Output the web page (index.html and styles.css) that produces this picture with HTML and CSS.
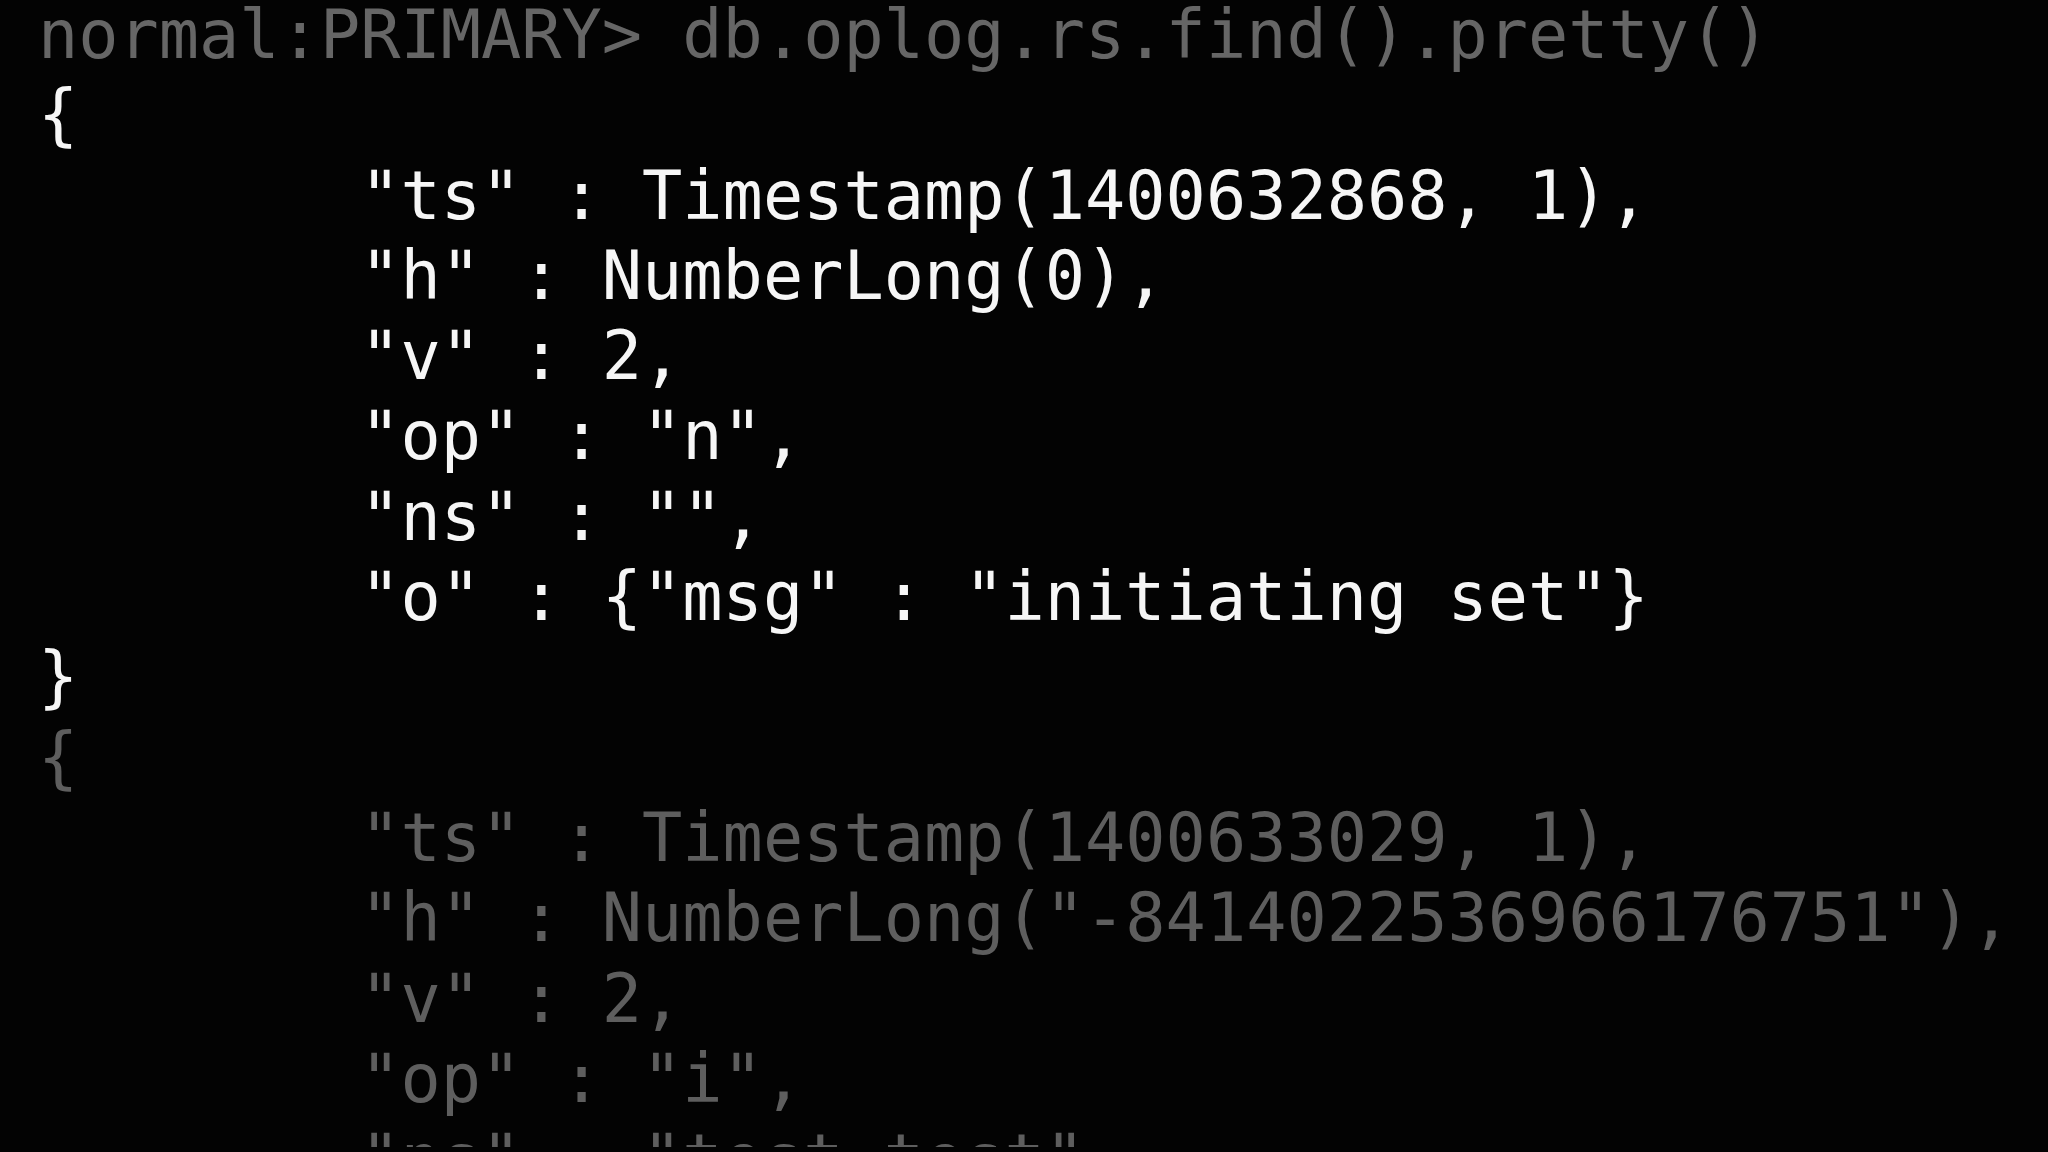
FILE: index.html
```html
<!DOCTYPE html>
<html lang="en">
<head>
  <meta charset="UTF-8"/>
  <title>mongo shell - oplog</title>
  <link rel="stylesheet" href="styles.css">
</head>
<body>
  <div class="terminal">
<pre class="prompt">normal:PRIMARY&gt; db.oplog.rs.find().pretty()</pre>
<pre class="record">{
        "ts" : Timestamp(1400632868, 1),
        "h" : NumberLong(0),
        "v" : 2,
        "op" : "n",
        "ns" : "",
        "o" : {"msg" : "initiating set"}
}</pre>
<pre class="record dim">{
        "ts" : Timestamp(1400633029, 1),
        "h" : NumberLong("-8414022536966176751"),
        "v" : 2,
        "op" : "i",
        "ns" : "test.test",
        "o" : {"_id" : ObjectId("537b7e75a2e1ddd6b3b0e64d"), "x" : 1}
}</pre>
  </div>
</body>
</html>
```

FILE: styles.css
```css
html, body { margin: 0; padding: 0; background: #030303; overflow: hidden; }
.terminal {
  height: 1152px; overflow: hidden;
  padding-left: 38px; margin-top: -5px;
  font-family: "DejaVu Sans Mono", "Liberation Mono", monospace;
  font-size: 66.9px; line-height: 80.3px;
  color: #f6f6f6;
}
.terminal pre { margin: 0; font: inherit; white-space: pre; }
.prompt { color: #666; }
.dim { color: #5e5e5e; }
```
